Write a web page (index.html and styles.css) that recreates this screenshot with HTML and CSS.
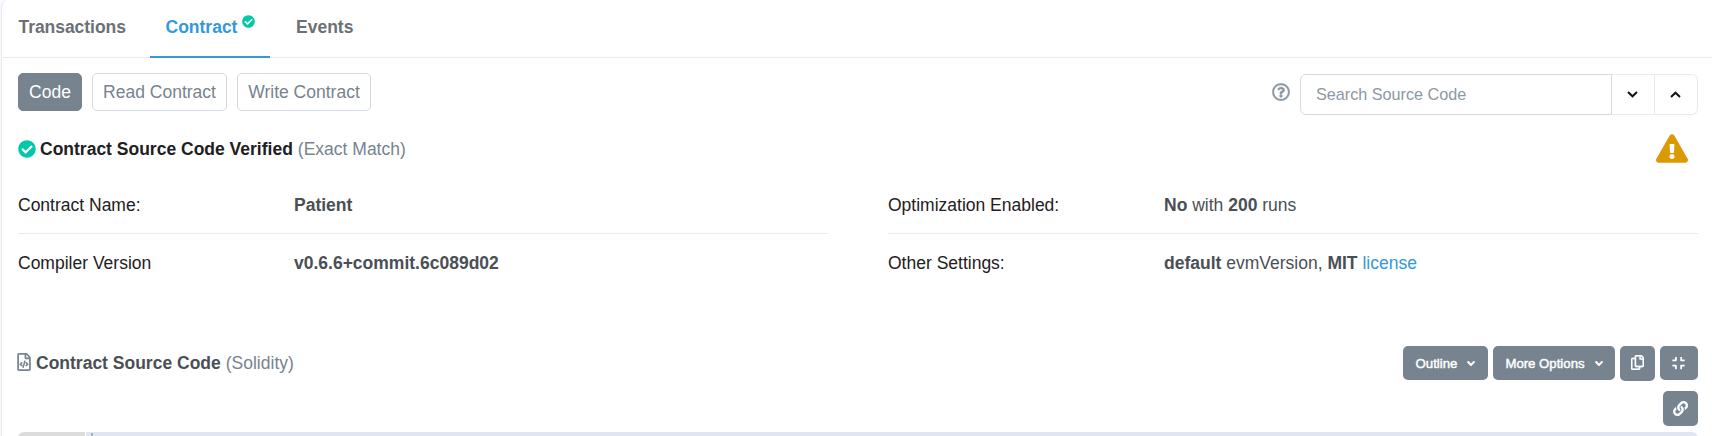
FILE: index.html
```html
<!DOCTYPE html>
<html lang="en">
<head>
<meta charset="utf-8">
<title>Contract Source Code</title>
<link rel="stylesheet" href="styles.css">
</head>
<body>
<svg class="sprite" width="0" height="0">
  <symbol id="check" viewBox="0 0 512 512"><path d="M504 256c0 136.967-111.033 248-248 248S8 392.967 8 256 119.033 8 256 8s248 111.033 248 248zM227.314 387.314l184-184c6.248-6.248 6.248-16.379 0-22.627l-22.627-22.627c-6.248-6.249-16.379-6.249-22.628 0L216 308.118l-70.059-70.059c-6.248-6.248-16.379-6.248-22.628 0l-22.627 22.627c-6.248 6.248-6.248 16.379 0 22.627l104 104c6.249 6.249 16.379 6.249 22.628.001z"/></symbol>
  <symbol id="question" viewBox="0 0 512 512"><path d="M256 8C119.043 8 8 119.083 8 256c0 136.997 111.043 248 248 248s248-111.003 248-248C504 119.083 392.957 8 256 8zm0 448c-110.532 0-200-89.431-200-200 0-110.495 89.472-200 200-200 110.491 0 200 89.471 200 200 0 110.53-89.431 200-200 200zm107.244-255.2c0 67.052-72.421 68.084-72.421 92.863V300c0 6.627-5.373 12-12 12h-45.647c-6.627 0-12-5.373-12-12v-8.659c0-35.745 27.1-50.034 47.579-61.516 17.561-9.845 28.324-16.541 28.324-29.579 0-17.246-21.999-28.693-39.784-28.693-23.189 0-33.894 10.977-48.942 29.969-4.057 5.12-11.46 6.071-16.666 2.124l-27.824-21.098c-5.107-3.872-6.251-11.066-2.644-16.363C184.846 131.491 214.94 112 261.794 112c49.071 0 101.45 38.304 101.45 88.8zM298 368c0 23.159-18.841 42-42 42s-42-18.841-42-42 18.841-42 42-42 42 18.841 42 42z"/></symbol>
  <symbol id="warning" viewBox="0 0 576 512"><path d="M569.517 440.013C587.975 472.007 564.806 512 527.94 512H48.054c-36.937 0-59.999-40.055-41.577-71.987L246.423 23.985c18.467-32.009 64.72-31.951 83.154 0l239.94 416.028zM288 354c-25.405 0-46 20.595-46 46s20.595 46 46 46 46-20.595 46-46-20.595-46-46-46zm-43.673-165.346l7.418 136c.347 6.364 5.609 11.346 11.982 11.346h48.546c6.373 0 11.635-4.982 11.982-11.346l7.418-136c.375-6.874-5.098-12.654-11.982-12.654h-63.383c-6.884 0-12.356 5.78-11.981 12.654z"/></symbol>
  <symbol id="angle-down" viewBox="0 0 320 512"><path d="M143 352.3L7 216.3c-9.400-9.400-9.400-24.600 0-33.900l22.600-22.600c9.400-9.400 24.600-9.400 33.900 0l96.400 96.400 96.400-96.400c9.400-9.400 24.600-9.400 33.900 0l22.600 22.600c9.400 9.400 9.400 24.600 0 33.900l-136 136c-9.200 9.400-24.400 9.400-33.800 0z"/></symbol>
  <symbol id="chevron" viewBox="0 0 11 7"><path d="M1 1l4.500 4.300L10 1" fill="none" stroke="currentColor" stroke-width="2"/></symbol>
  <symbol id="file-code" viewBox="0 0 384 512"><path d="M149.900 349.100l-.2-.2-32.800-28.900 32.800-28.900c3.600-3.200 4-8.800.8-12.400l-.2-.2-17.400-18.600c-3.400-3.600-9-3.700-12.400-.4l-57.700 54.100c-3.700 3.500-3.700 9.400 0 12.800l57.700 54.100c1.600 1.500 3.800 2.400 6 2.400 2.400 0 4.800-1 6.400-2.800l17.400-18.600c3.300-3.500 3.100-9.100-.4-12.400zm220-251.200L286 14C277 5 264.800-.1 252.100-.1H48C21.500 0 0 21.500 0 48v416c0 26.500 21.500 48 48 48h288c26.500 0 48-21.500 48-48V131.900c0-12.700-5.100-25-14.100-34zM256 51.900l76.100 76.100H256zM336 464H48V48h160v104c0 13.300 10.700 24 24 24h104zM209.600 214c-4.700-1.400-9.500 1.300-10.900 6L144 408.100c-1.400 4.700 1.300 9.600 6 10.900l24.400 7.100c4.700 1.400 9.600-1.400 10.900-6L240 231.900c1.400-4.700-1.300-9.600-6-10.900zm24.500 76.900l.2.2 32.800 28.900-32.800 28.900c-3.600 3.200-4 8.800-.8 12.400l.2.2 17.400 18.600c3.300 3.500 8.900 3.700 12.400.4l57.700-54.100c3.700-3.500 3.700-9.400 0-12.800l-57.700-54.100c-3.500-3.300-9.100-3.200-12.400.4l-17.400 18.600c-3.300 3.500-3.100 9.100.4 12.400z"/></symbol>
  <symbol id="copy" viewBox="0 0 448 512"><path d="M433.941 65.941l-51.882-51.882A48 48 0 0 0 348.118 0H176c-26.510 0-48 21.490-48 48v48H48c-26.510 0-48 21.490-48 48v320c0 26.510 21.490 48 48 48h224c26.510 0 48-21.490 48-48v-48h80c26.510 0 48-21.490 48-48V99.882a48 48 0 0 0-14.059-33.941zM266 464H54a6 6 0 0 1-6-6V150a6 6 0 0 1 6-6h74v224c0 26.510 21.490 48 48 48h96v42a6 6 0 0 1-6 6zm128-96H182a6 6 0 0 1-6-6V54a6 6 0 0 1 6-6h106v88c0 13.255 10.745 24 24 24h88v202a6 6 0 0 1-6 6zm6-256h-64V48h9.632c1.591 0 3.117.632 4.243 1.757l48.368 48.368a6 6 0 0 1 1.757 4.243V112z"/></symbol>
  <symbol id="compress" viewBox="0 0 448 512"><path d="M436 192H312c-13.300 0-24-10.700-24-24V44c0-6.600 5.400-12 12-12h40c6.600 0 12 5.400 12 12v84h84c6.600 0 12 5.400 12 12v40c0 6.600-5.400 12-12 12zm-276-24V44c0-6.600-5.400-12-12-12h-40c-6.600 0-12 5.400-12 12v84H12c-6.600 0-12 5.400-12 12v40c0 6.600 5.400 12 12 12h124c13.300 0 24-10.700 24-24zm0 300V344c0-13.300-10.700-24-24-24H12c-6.600 0-12 5.400-12 12v40c0 6.600 5.400 12 12 12h84v84c0 6.600 5.400 12 12 12h40c6.600 0 12-5.400 12-12zm192 0v-84h84c6.600 0 12-5.400 12-12v-40c0-6.600-5.400-12-12-12H312c-13.300 0-24 10.700-24 24v124c0 6.600 5.400 12 12 12h40c6.600 0 12-5.400 12-12z"/></symbol>
  <symbol id="link" viewBox="0 0 512 512"><path d="M326.612 185.391c59.747 59.809 58.927 155.698.36 214.590-.11.120-.240.250-.360.370l-67.200 67.200c-59.270 59.270-155.699 59.262-214.960 0-59.270-59.260-59.270-155.700 0-214.960l37.106-37.106c9.840-9.840 26.786-3.300 27.294 10.606.648 17.722 3.826 35.527 9.690 52.721 1.986 5.822.567 12.262-3.783 16.612l-13.087 13.087c-28.026 28.026-28.905 73.660-1.155 101.960 28.024 28.579 74.086 28.749 102.325.510l67.200-67.190c28.191-28.191 28.073-73.757 0-101.830-3.701-3.694-7.429-6.564-10.341-8.569a16.037 16.037 0 0 1-6.947-12.606c-.396-10.567 3.348-21.456 11.698-29.806l21.054-21.055c5.521-5.521 14.182-6.199 20.584-1.731a152.482 152.482 0 0 1 20.522 17.197zM467.547 44.449c-59.261-59.262-155.690-59.270-214.960 0l-67.200 67.200c-.120.120-.250.250-.360.370-58.566 58.892-59.387 154.781.360 214.590a152.454 152.454 0 0 0 20.521 17.196c6.402 4.468 15.064 3.789 20.584-1.731l21.054-21.055c8.350-8.350 12.094-19.239 11.698-29.806a16.037 16.037 0 0 0-6.947-12.606c-2.912-2.005-6.640-4.875-10.341-8.569-28.073-28.073-28.191-73.639 0-101.830l67.200-67.190c28.239-28.239 74.300-28.069 102.325.510 27.750 28.300 26.872 73.934-1.155 101.960l-13.087 13.087c-4.350 4.350-5.769 10.790-3.783 16.612 5.864 17.194 9.042 34.999 9.690 52.721.509 13.906 17.454 20.446 27.294 10.606l37.106-37.106c59.271-59.259 59.271-155.699.001-214.959z"/></symbol>
</svg>

<main class="card">
  <nav class="tabs">
    <a class="tab tab-first">Transactions</a>
    <a class="tab tab-active">Contract<svg class="tab-check"><use href="#check"/></svg></a>
    <a class="tab">Events</a>
  </nav>

  <section class="toolbar">
    <div class="views">
      <button class="view view-active">Code</button>
      <button class="view view-read">Read Contract</button>
      <button class="view view-write">Write Contract</button>
    </div>
    <div class="search">
      <svg class="help"><use href="#question"/></svg>
      <div class="search-group">
        <input class="search-input" type="text" placeholder="Search Source Code">
        <button class="step"><svg><use href="#chevron"/></svg></button>
        <button class="step step-up"><svg><use href="#chevron"/></svg></button>
      </div>
    </div>
  </section>

  <section class="verified">
    <h3 class="verified-title"><svg class="ok"><use href="#check"/></svg><span>Contract Source Code Verified</span> <span class="muted">(Exact Match)</span></h3>
    <svg class="alert"><use href="#warning"/></svg>
  </section>

  <section class="details">
    <dl class="list">
      <div class="row"><dt>Contract Name:</dt><dd><b>Patient</b></dd></div>
      <div class="row"><dt>Compiler Version</dt><dd><b>v0.6.6+commit.6c089d02</b></dd></div>
    </dl>
    <dl class="list">
      <div class="row"><dt>Optimization Enabled:</dt><dd><b>No</b> with <b>200</b> runs</dd></div>
      <div class="row"><dt>Other Settings:</dt><dd><b>default</b> evmVersion, <b>MIT</b> <a class="link">license</a></dd></div>
    </dl>
  </section>

  <section class="source">
    <h4 class="source-title"><svg class="file"><use href="#file-code"/></svg><span>Contract Source Code</span> <span class="muted">(Solidity)</span></h4>
    <div class="actions">
      <div class="action-row">
        <button class="btn outline">Outline<svg class="caret"><use href="#angle-down"/></svg></button>
        <button class="btn more">More Options<svg class="caret"><use href="#angle-down"/></svg></button>
        <button class="btn square"><svg class="i-copy"><use href="#copy"/></svg></button>
        <button class="btn compress"><svg class="i-compress"><use href="#compress"/></svg></button>
      </div>
      <button class="btn square"><svg class="i-link"><use href="#link"/></svg></button>
    </div>
  </section>

  <div class="editor"><div class="gutter"></div><div class="line"><div class="cursor"></div></div></div>
</main>
</body>
</html>
```

FILE: styles.css
```css
* { box-sizing: border-box; }
body {
  margin: 0;
  height: 436px;
  overflow: hidden;
  background: #f8f9fc;
  font-family: "Liberation Sans", Arial, sans-serif;
  font-size: 17.5px;
  color: #4a4f55;
}
svg { display: block; fill: currentColor; flex: none; }
.sprite { position: absolute; }
button { font-family: inherit; margin: 0; }
h3, h4, dl, dd { margin: 0; }

.card {
  height: 436px;
  overflow: hidden;
  margin-left: 1px;
  background: #fff;
  border-left: 1px solid #e7eaf3;
  border-top-left-radius: 8px;
  padding-left: 1px;
}

.tabs { display: flex; height: 58px; border-bottom: 1px solid #e7eaf3; }
.tab {
  display: flex;
  height: 58px;
  padding: 17px 17px 0;
  margin-right: 9px;
  font-size: 17.5px;
  line-height: 20px;
  font-weight: bold;
  color: #6c7075;
}
.tab-first { width: 138px; padding-left: 15.5px; letter-spacing: -0.05px; }
.tab-active { width: 120px; padding: 17px 0 0 15.5px; border-bottom: 2px solid #3498db; color: #3498db; }
.tab-check { width: 13px; height: 13px; margin: -2px 0 0 5px; color: #00c9a7; }

.toolbar { display: flex; justify-content: space-between; padding: 15px 14px 0 15px; }
.views { display: flex; gap: 10px; }
.view {
  width: 64px;
  height: 38px;
  padding: 0;
  border: 1px solid #d5dae2;
  border-radius: 5px;
  background: #fff;
  color: #77838f;
  font-size: 17.5px;
  white-space: nowrap;
}
.view-read { width: 135px; }
.view-write { width: 134px; }
.view-active { background: #77838f; border-color: #77838f; color: #fff; }
.search { display: flex; }
.help { width: 18px; height: 18px; margin: 10px 10px 0 0; color: #8c98a4; stroke: currentColor; stroke-width: 10px; overflow: visible; }
.search-group { display: flex; width: 398px; height: 41px; margin-top: 1px; }
.search-input {
  width: 312px;
  padding: 0 15px;
  border: 1px solid #d5dae2;
  border-radius: 6px 0 0 6px;
  font: 16.2px "Liberation Sans", Arial, sans-serif;
  outline: 0;
}
.search-input::placeholder { color: #8c98a4; }
.step {
  display: flex;
  align-items: center;
  justify-content: center;
  width: 43px;
  padding: 0 1px 0 0;
  border: 1px solid #e7eaf3;
  border-left: 0;
  background: #fff;
  color: #111;
}
.step svg { width: 11px; height: 7px; }
.step-up { border-radius: 0 6px 6px 0; }
.step-up svg { transform: rotate(180deg); }

.verified { display: flex; justify-content: space-between; height: 50px; padding: 19px 24px 0 15px; }
.verified-title { display: flex; align-items: center; height: 30px; font-size: 17.5px; color: #1e2022; white-space: pre; }
.ok { width: 18px; height: 18px; margin: -1px 4px 0 0; color: #00c9a7; }
.muted { margin-left: 5px; font-weight: normal; color: #77838f; }
.alert { width: 32px; height: 29px; color: #db9a04; }

.details { display: grid; grid-template-columns: 810px 810px; column-gap: 60px; padding: 11px 0 0 15px; }
.row { display: flex; align-items: center; height: 58px; padding-top: 1px; }
.row:first-child { border-bottom: 1px solid #e7eaf3; }
.row dt { width: 276px; color: #1e2022; }
.row + .row { height: 59px; padding-top: 0; }
.link { color: #3498db; }

.source { display: flex; justify-content: space-between; height: 86px; margin-top: 53px; padding: 0 14px 0 14px; }
.source-title { display: flex; align-items: center; height: 34px; font-size: 17.5px; }
.file { width: 14px; height: 18px; margin: -2px 5px 0 0; color: #77838f; }
.actions { display: flex; flex-direction: column; align-items: flex-end; gap: 10px; }
.action-row { display: flex; align-items: flex-start; gap: 5px; }
.btn {
  display: flex;
  align-items: center;
  justify-content: center;
  height: 34px;
  padding: 0;
  border: 0;
  border-radius: 5px;
  background: #77838f;
  color: #fff;
  font-size: 13.2px;
  -webkit-text-stroke: 0.45px #fff;
}
.outline { width: 85px; }
.more { width: 122px; }
.square { width: 35px; height: 35px; }
.compress { width: 38px; }
.caret { width: 8px; height: 13px; margin-left: 10px; }
.i-copy { width: 13px; height: 15px; margin-top: -2px; stroke: currentColor; stroke-width: 10px; overflow: visible; }
.i-compress { width: 13px; height: 14px; margin-right: 1px; }
.i-link { width: 15px; height: 15px; margin: -1px 1px 0 0; }

.editor { display: flex; height: 20px; margin: 0 14px 0 15px; border-radius: 6px 6px 0 0; overflow: hidden; }
.gutter { width: 67px; background: #dcdcdc; }
.line { flex: 1; margin-left: 1px; padding-left: 5px; background: #e0e6f1; }
.cursor { width: 2px; height: 20px; margin-top: 1px; background: #a9b0bd; }
```
